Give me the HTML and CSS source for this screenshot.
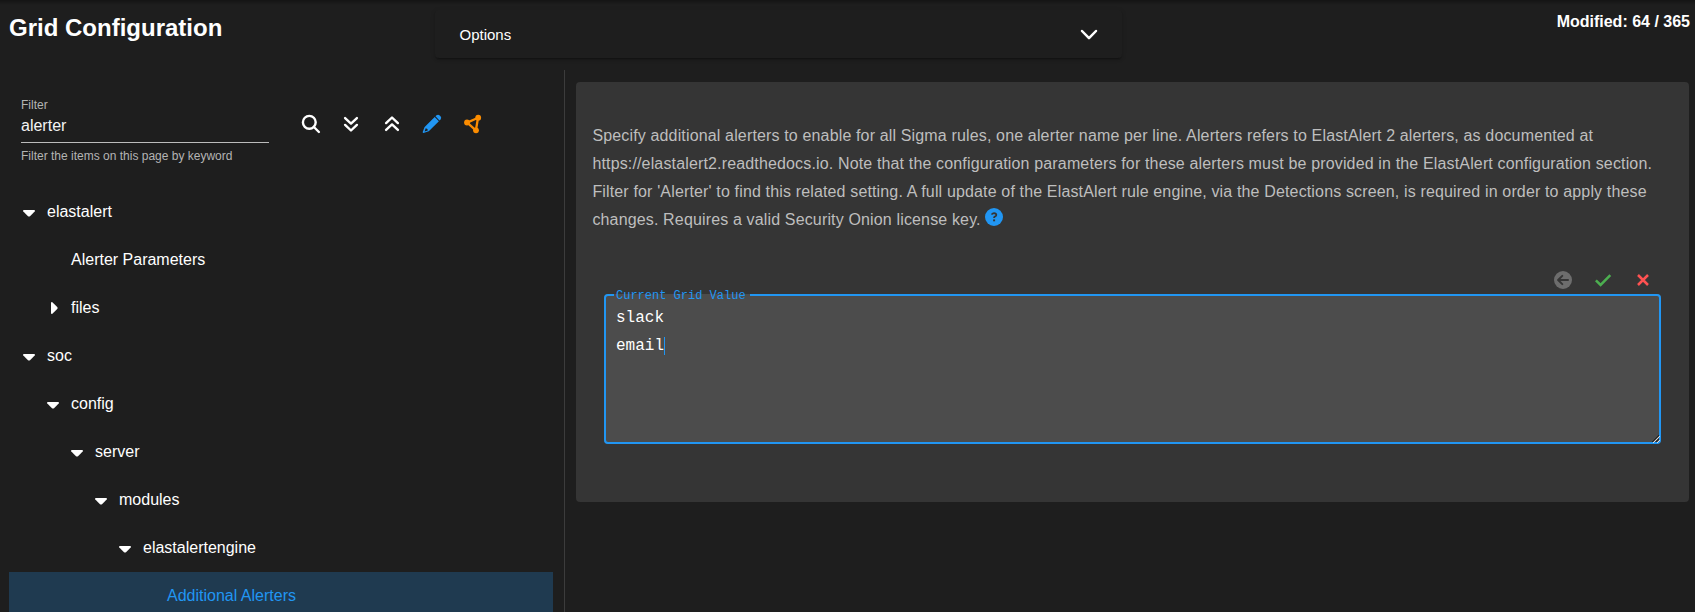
FILE: index.html
```html
<!DOCTYPE html>
<html lang="en">
<head>
<meta charset="utf-8">
<title>Grid Configuration</title>
<link rel="stylesheet" href="styles.css">
</head>
<body>
<svg width="0" height="0" class="defs">
  <symbol id="caret-down" viewBox="0 0 12 7"><path d="M.9 0h10.2q1.3.2.6 1.4L7 6.2Q6 7 5 6.2L.3 1.4Q-.4.2.9 0z"/></symbol>
  <symbol id="caret-right" viewBox="0 0 7 12"><path d="M0 .9v10.2q.2 1.3 1.4.6L6.200 7Q7 6 6.200 5L1.400.3Q.2-.4 0 .9z"/></symbol>
</svg>
<header class="top">
  <h1 class="title">Grid Configuration</h1>
  <section class="options">
    <span>Options</span>
    <svg class="chevron" width="18" height="12" viewBox="0 0 18 12"><path d="M2 2l7 7.200L16 2"/></svg>
  </section>
  <div class="modified">Modified: 64 / 365</div>
</header>
<main class="main">
  <aside class="side">
    <div class="toolbar">
      <div class="filter">
        <label class="filter-label">Filter</label>
        <div class="filter-value">alerter</div>
        <div class="hint">Filter the items on this page by keyword</div>
      </div>
      <div class="tools">
        <svg width="20" height="20" viewBox="0 0 20 20" class="line"><circle cx="8.300" cy="8.300" r="6.400"/><path d="M12.900 13l5 5"/></svg>
        <svg width="20" height="20" viewBox="0 0 20 20" class="line"><path d="M4.100 4.100l5.900 5.500 5.900-5.500M4.100 10.900l5.900 5.600 5.900-5.600"/></svg>
        <svg width="20" height="20" viewBox="0 0 20 20" class="line"><path d="M4.100 9.100L10 3.500l5.900 5.600M4.100 15.900l5.900-5.500 5.900 5.500"/></svg>
        <svg width="20" height="20" viewBox="0 0 20 20" class="pencil"><path d="M13.500 2.300l1-1q1.600-1.300 3.200.1l.8.8q1.400 1.600.1 3.200l-1.100 1.100z"/><path fill-rule="evenodd" d="M12.700 3l4.200 4.200L7.300 16.700q-.6.5-1.300.7L1.400 18.900q-.9.100-.7-.8L2.200 13.900q.2-.7.7-1.200zM3.700 14.300l-1.100 3.300 3.200-1.100-.4-1.400z"/></svg>
        <svg width="20" height="20" viewBox="0 0 20 20" class="graph"><path d="M4.200 8.600L15 3.800 12.900 16.400z"/><circle cx="4" cy="8.500" r="2.900"/><circle cx="15.200" cy="3.700" r="2.900"/><circle cx="13" cy="16.300" r="2.900"/></svg>
      </div>
    </div>
    <ul class="tree">
      <li class="row l0"><svg class="caret"><use href="#caret-down"/></svg><span>elastalert</span></li>
      <li class="row l1"><i class="blank"></i><span>Alerter Parameters</span></li>
      <li class="row l1"><svg class="caret right"><use href="#caret-right"/></svg><span>files</span></li>
      <li class="row l0"><svg class="caret"><use href="#caret-down"/></svg><span>soc</span></li>
      <li class="row l1"><svg class="caret"><use href="#caret-down"/></svg><span>config</span></li>
      <li class="row l2"><svg class="caret"><use href="#caret-down"/></svg><span>server</span></li>
      <li class="row l3"><svg class="caret"><use href="#caret-down"/></svg><span>modules</span></li>
      <li class="row l4"><svg class="caret"><use href="#caret-down"/></svg><span>elastalertengine</span></li>
      <li class="row l5 active"><i class="blank"></i><span>Additional Alerters</span></li>
    </ul>
  </aside>
  <section class="detail">
    <article class="card">
      <p class="desc">Specify additional alerters to enable for all Sigma rules, one alerter name per line. Alerters refers to ElastAlert 2 alerters, as documented at https://elastalert2.readthedocs.io. Note that the configuration parameters for these alerters must be provided in the ElastAlert configuration section. Filter for 'Alerter' to find this related setting. A full update of the ElastAlert rule engine, via the Detections screen, is required in order to apply these changes. Requires a valid Security Onion license key. <svg class="help" width="18" height="18" viewBox="0 0 18 18"><circle cx="9" cy="9" r="9"/><path d="M6.800 6.700Q7 5.300 9 5.200q2.200.100 2.300 1.700 0 1-1.100 1.500Q9 8.900 9 10"/><rect x="8.100" y="11.400" width="2" height="1.900"/></svg></p>
      <div class="actions">
        <svg width="20" height="20" viewBox="0 0 20 20" class="undo"><circle cx="10" cy="10" r="9"/><path d="M9.300 5.900L5.100 10l4.200 4.100M5.300 10h9.700"/></svg>
        <svg width="20" height="20" viewBox="0 0 20 20" class="ok"><path d="M2.900 10.300l4.700 4.600L17.300 5.100"/></svg>
        <svg width="20" height="20" viewBox="0 0 20 20" class="cancel"><path d="M5 5l10 10M15 5L5 15"/></svg>
      </div>
      <fieldset class="field">
        <legend class="legend">Current Grid Value</legend>
        <div class="value">slack<br>email<span class="cursor"></span></div>
        <svg class="grip" width="8" height="8" viewBox="0 0 8 8" shape-rendering="crispEdges"><path class="dark" d="M0 7L7 0M4 7L7 4"/><path class="light" d="M1 8L8 1M5 8L8 5"/></svg>
      </fieldset>
    </article>
  </section>
</main>
</body>
</html>
```

FILE: styles.css
```css
* { box-sizing: border-box; }
body {
  margin: 0;
  height: 612px;
  overflow: hidden;
  background: linear-gradient(#141414, #1e1e1e 5px) #1e1e1e;
  color: #fff;
  font: 16px/24px "Liberation Sans", Arial, sans-serif;
  display: flex;
  flex-direction: column;
}
svg { display: block; flex: none; }
.defs { position: absolute; }
.top {
  height: 70px;
  flex: none;
  display: grid;
  grid-template-columns: 426px 687px 1fr;
  padding: 0 5px 0 9px;
}
.title { margin: 12px 0 0; font-size: 24px; line-height: 32px; }
.options {
  margin-top: 10px;
  height: 48px;
  padding: 2px 24px 0 24.500px;
  display: flex;
  align-items: center;
  justify-content: space-between;
  font-size: 15px;
  border-radius: 4px;
  box-shadow: 0 3px 1px -2px rgba(0, 0, 0, .2), 0 2px 2px rgba(0, 0, 0, .14), 0 1px 5px rgba(0, 0, 0, .12);
}
.chevron { fill: none; stroke: #fff; stroke-width: 2.500; stroke-linecap: round; stroke-linejoin: round; }
.modified { margin-top: 10px; text-align: right; font-weight: bold; }
.main { flex: 1; min-height: 0; display: flex; }
.side { width: 565px; flex: none; padding: 27px 11px 0 9px; border-right: 1px solid #3c3c3c; }
.toolbar { height: 91px; display: flex; padding-left: 12px; }
.filter { width: 248px; }
.filter-label { display: block; font-size: 12px; line-height: 16px; color: #b4b4b4; }
.filter-value { height: 30px; padding-top: 1px; border-bottom: 1px solid #bcbcbc; line-height: 24px; color: #f4f4f4; }
.hint { padding-top: 5px; font-size: 12px; line-height: 16px; color: #b4b4b4; }
.tools { display: flex; gap: 20.400px; padding: 17px 0 0 32px; }
.line { fill: none; stroke: #fff; stroke-width: 2.400; stroke-linecap: round; stroke-linejoin: round; }
.pencil { fill: #2196f3; }
.graph { fill: #fb8c00; }
.graph path { fill: none; stroke: #fb8c00; stroke-width: 2.300; }
.tree { list-style: none; margin: 0; padding: 0; }
.row { height: 48px; display: flex; align-items: center; gap: 12px; padding-left: 14px; }
.caret { width: 12px; height: 7px; fill: #fff; margin-top: 3px; }
.caret.right { width: 7px; height: 12px; margin: 0 1px 0 4px; }
.blank { width: 12px; }
.l1 { padding-left: 38px; }
.l2 { padding-left: 62px; }
.l3 { padding-left: 86px; }
.l4 { padding-left: 110px; }
.l5 { padding-left: 134px; }
.active { background: #1f3a50; color: #2196f3; }
.detail { flex: 1; padding: 12px 6px 0 11px; }
.card { height: 420px; border-radius: 4px; background: #353535; padding: 40px 28px 0 16px; }
.desc { margin: 0 -12px 0 .4px; height: 112px; line-height: 28px; letter-spacing: .15px; color: #bebebe; }
.help { display: inline-block; vertical-align: -1px; fill: #2196f3; }
.help path { fill: none; stroke: #353535; stroke-width: 1.800; }
.help rect { fill: #353535; }
.actions { display: flex; justify-content: flex-end; gap: 20px; padding: 36px 8px 0 0; height: 55px; }
.actions svg { fill: none; stroke-width: 2.500; }
.undo circle { fill: #6d6d6d; }
.undo path { stroke: #353535; stroke-width: 2; stroke-linecap: round; stroke-linejoin: round; }
.ok { stroke: #4caf50; }
.cancel { stroke: #ff5252; }
.field {
  position: relative;
  height: 155px;
  margin: 0 0 0 12px;
  min-width: 0;
  padding: 0 10px;
  border: 2px solid #2196f3;
  border-radius: 4px;
  background: #4c4c4c;
  font-family: "Liberation Mono", monospace;
}
.legend { width: 136px; height: 12px; margin-left: -2px; padding: 0 0 0 2px; font-size: 12px; line-height: 14px; color: #2196f3; }
.value { line-height: 28px; margin-top: 3px; }
.cursor { display: inline-block; width: 1px; height: 18px; background: #2196f3; vertical-align: -5px; }
.grip { position: absolute; right: -1px; bottom: -1px; fill: none; }
.dark { stroke: #222; }
.light { stroke: #ddd; }
```
